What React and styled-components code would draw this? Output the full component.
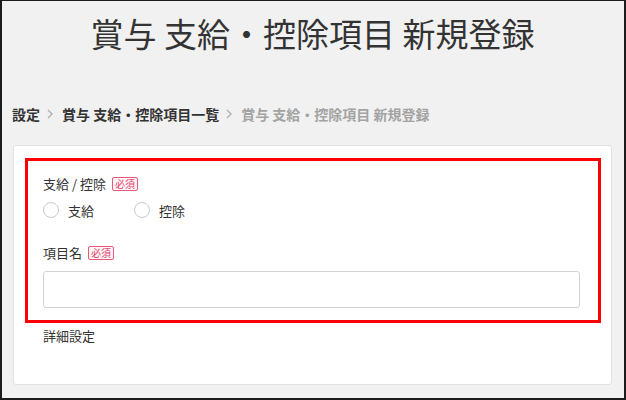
import React from 'react'
import styled, { createGlobalStyle } from 'styled-components'

const GlobalStyle = createGlobalStyle`
  html, body {
    margin: 0;
    padding: 0;
  }
  body {
    font-family: "Noto Sans CJK JP", "Noto Sans", sans-serif;
    color: #333;
  }
  * {
    box-sizing: border-box;
  }
`

const Page = styled.div`
  width: 626px;
  height: 400px;
  background-color: #f1f1f1;
  border: 2px solid #1c1c1c;
  border-top-width: 1px;
  padding: 0 12px 0 11px;
  overflow: hidden;
`

const Title = styled.h1`
  margin: 0;
  padding-top: 10px;
  text-align: center;
  font-size: 33px;
  line-height: 44px;
  font-weight: 400;
  color: #333;
`

const Breadcrumb = styled.nav`
  display: flex;
  align-items: center;
  margin-top: 49px;
  margin-left: -1px;
  height: 20px;
  font-size: 14px;
  font-weight: 700;
`

const Crumb = styled.span`
  color: ${(p) => (p.current ? '#a3a3a3' : '#333')};
  white-space: nowrap;
`

const Separator = styled.span`
  display: flex;
  align-items: center;
  padding: 0 9px 0 7px;
  svg {
    display: block;
  }
`

const Card = styled.section`
  margin-top: 21px;
  height: 240px;
  background: #fff;
  border: 1px solid #e2e2e2;
  border-radius: 3px;
  padding: 12px 10px 0 11px;
`

const Highlight = styled.div`
  border: 3px solid #ff0000;
  padding: 13px 18px 12px 15px;
`

const Label = styled.div`
  display: flex;
  align-items: center;
  gap: 6px;
  font-size: 13px;
  line-height: 20px;
  margin-top: ${(p) => p.gap || 0}px;
`

const Badge = styled.span`
  display: inline-flex;
  align-items: center;
  height: 14px;
  padding: 0 2px;
  font-size: 10px;
  line-height: 12px;
  color: #e5436a;
  border: 1px solid #e8587a;
  border-radius: 2px;
  background: #fff6f8;
`

const RadioRow = styled.div`
  display: flex;
  align-items: center;
  margin-top: 6px;
  height: 20px;
`

const RadioItem = styled.label`
  display: flex;
  align-items: center;
  gap: 9px;
  margin-right: 40px;
  font-size: 13px;
  color: #333;
`

const Circle = styled.span`
  width: 16px;
  height: 16px;
  border-radius: 50%;
  border: 1px solid #c9c9c9;
  background: #fff;
`

const Input = styled.input`
  display: block;
  width: 100%;
  height: 37px;
  margin-top: 8px;
  border: 1px solid #d3d3d3;
  border-radius: 3px;
  background: #fff;
  outline: none;
`

const SubHeading = styled.div`
  margin-top: 3px;
  padding-left: 18px;
  font-size: 13px;
  line-height: 20px;
  color: #333;
`

const Chevron = () => (
  <svg width="6" height="10" viewBox="0 0 6 10">
    <path d="M1 1l4 4-4 4" fill="none" stroke="#b0b0b0" strokeWidth="1.4" />
  </svg>
)

const crumbs = ['設定', '賞与 支給・控除項目一覧', '賞与 支給・控除項目 新規登録']

export default function App() {
  return (
    <Page>
      <GlobalStyle />
      <Title>賞与 支給・控除項目 新規登録</Title>
      <Breadcrumb>
        {crumbs.map((c, i) => (
          <React.Fragment key={c}>
            {i > 0 && (
              <Separator>
                <Chevron />
              </Separator>
            )}
            <Crumb current={i === crumbs.length - 1}>{c}</Crumb>
          </React.Fragment>
        ))}
      </Breadcrumb>
      <Card>
        <Highlight>
          <Label>
            支給 / 控除 <Badge>必須</Badge>
          </Label>
          <RadioRow>
            <RadioItem>
              <Circle />
              支給
            </RadioItem>
            <RadioItem>
              <Circle />
              控除
            </RadioItem>
          </RadioRow>
          <Label gap={23}>
            項目名 <Badge>必須</Badge>
          </Label>
          <Input type="text" />
        </Highlight>
        <SubHeading>詳細設定</SubHeading>
      </Card>
    </Page>
  )
}
